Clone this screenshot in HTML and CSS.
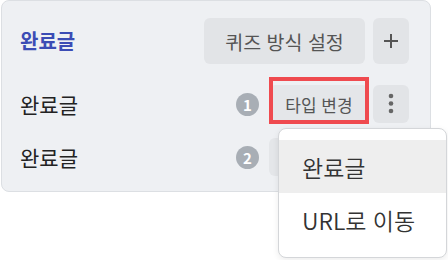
FILE: index.html
```html
<!DOCTYPE html>
<html lang="ko">
<head>
    <meta charset="UTF-8">
    <meta name="viewport" content="width=device-width, initial-scale=1.0">
    <title>완료글 설정</title>
    <link rel="stylesheet" href="styles.css">
</head>
<body>

    <div class="page">
        <div class="card">
            <div class="row row-head">
                <div class="label label-title">완료글</div>
                <button class="btn btn-quiz">퀴즈 방식 설정</button>
                <button class="btn btn-icon btn-plus">
                    <svg width="16" height="16" viewBox="0 0 16 16">
                        <path d="M8 1v14M1 8h14" stroke="#555" stroke-width="2" fill="none"/>
                    </svg>
                </button>
            </div>

            <div class="row">
                <div class="label">완료글</div>
                <span class="badge">1</span>
                <button class="btn btn-type marked">타입 변경</button>
                <button class="btn btn-icon btn-more">
                    <svg width="6" height="22" viewBox="0 0 6 22">
                        <circle cx="3" cy="3" r="2.3" fill="#666"/>
                        <circle cx="3" cy="10.5" r="2.3" fill="#666"/>
                        <circle cx="3" cy="18" r="2.3" fill="#666"/>
                    </svg>
                </button>
            </div>

            <div class="row">
                <div class="label">완료글</div>
                <span class="badge">2</span>
                <button class="btn btn-type">타입 변경</button>
                <button class="btn btn-icon btn-more">
                    <svg width="6" height="22" viewBox="0 0 6 22">
                        <circle cx="3" cy="3" r="2.3" fill="#666"/>
                        <circle cx="3" cy="10.5" r="2.3" fill="#666"/>
                        <circle cx="3" cy="18" r="2.3" fill="#666"/>
                    </svg>
                </button>
            </div>
        </div>

        <!-- type menu opened from the first row -->
        <ul class="menu">
            <li class="menu-item active">완료글</li>
            <li class="menu-item">URL로 이동</li>
        </ul>
    </div>

</body>
</html>
```

FILE: styles.css
```css
* {
    box-sizing: border-box;
    margin: 0;
    padding: 0;
}

body {
    font-family: "Noto Sans CJK KR", "Noto Sans", sans-serif;
    background-color: #fff;
    width: 448px;
    height: 260px;
    overflow: hidden;
}

.page {
    position: relative;
    width: 448px;
    height: 260px;
}

.card {
    margin-left: 1px;
    width: 430px;
    background-color: #eef0f3;
    border: 1px solid #dcdfe3;
    border-radius: 8px;
    padding: 17px 21px 15px 17px;
}

.row {
    display: flex;
    align-items: center;
    height: 38px;
}

.row + .row {
    margin-top: 15px;
}

.row-head {
    height: 46px;
    margin-bottom: 21px;
}

.row-head + .row {
    margin-top: 0;
}

.label {
    flex: 1;
    font-size: 21px;
    color: #222;
    line-height: 1;
    padding-left: 1px;
}

.label-title {
    color: #3b4cb5;
    font-weight: bold;
    font-size: 20px;
}

.btn {
    border: none;
    border-radius: 6px;
    background-color: #e2e4e7;
    color: #555;
    font-family: inherit;
    display: flex;
    align-items: center;
    justify-content: center;
    cursor: pointer;
}

.btn-quiz {
    width: 161px;
    height: 46px;
    font-size: 19.5px;
}

.btn-icon {
    width: 36px;
    margin-left: 8px;
}

.btn-plus {
    height: 46px;
}

.btn-more {
    height: 38px;
    margin-left: 4px;
}

.btn-type {
    position: relative;
    width: 100px;
    height: 38px;
    font-size: 17px;
    background-color: #e4e6e9;
}

/* red highlight drawn over the button */
.btn-type.marked::after {
    content: "";
    position: absolute;
    top: -8px;
    bottom: -1px;
    left: 0;
    right: 0;
    border: 4px solid #ef4a4f;
}

.badge {
    width: 23px;
    height: 23px;
    border-radius: 50%;
    background-color: #a8aeb5;
    color: #fff;
    font-size: 15px;
    font-weight: bold;
    display: flex;
    align-items: center;
    justify-content: center;
    margin-right: 10px;
}

.menu {
    position: absolute;
    left: 278px;
    top: 128px;
    width: 169px;
    list-style: none;
    background-color: #fff;
    border: 1px solid #d4d6d9;
    border-radius: 8px;
    padding: 11px 0;
    box-shadow: 0 2px 6px rgba(0, 0, 0, 0.08);
}

.menu-item {
    height: 53px;
    display: flex;
    align-items: center;
    padding-left: 23px;
    font-size: 23px;
    font-weight: 350;
    color: #333;
}

.menu-item.active {
    background-color: #eeeeee;
}
```
